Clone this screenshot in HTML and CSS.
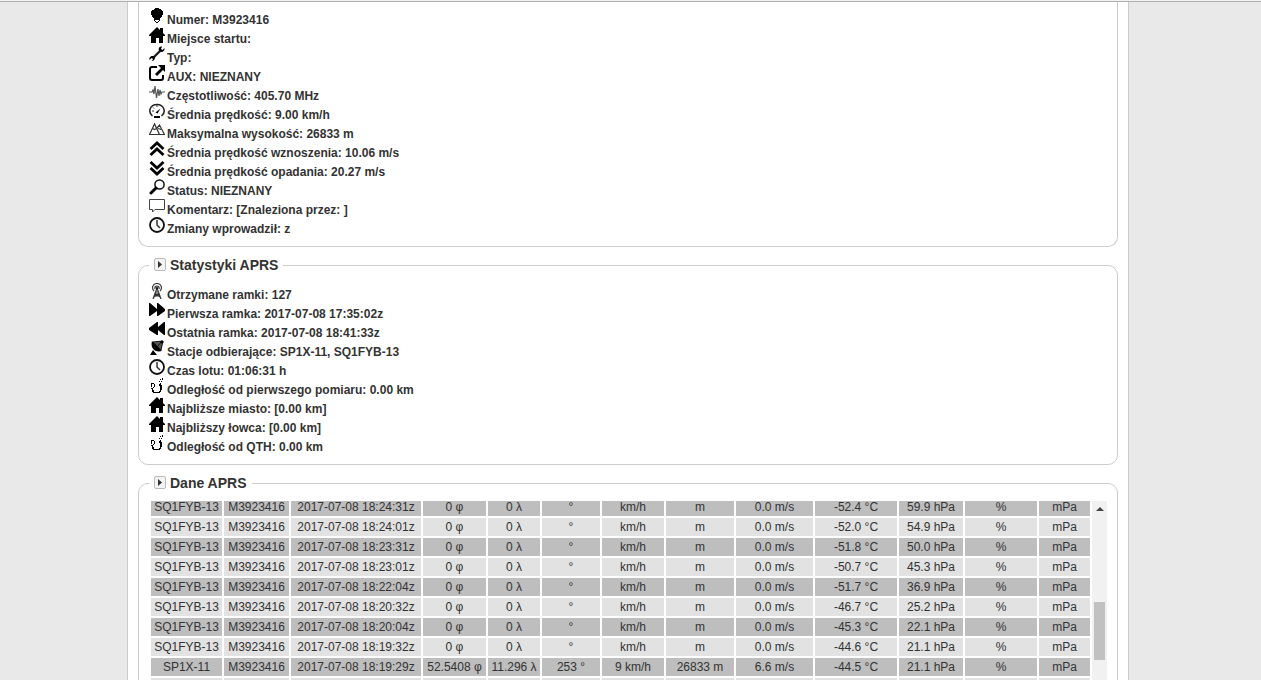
FILE: index.html
```html
<!DOCTYPE html>
<html lang="pl">
<head>
    <meta charset="UTF-8">
    <meta name="viewport" content="width=device-width, initial-scale=1.0">
    <title>Radiosonda M3923416</title>
    <link rel="stylesheet" href="styles.css">
</head>
<body>
    <svg class="sprite" viewBox="0 0 16 16">
        <symbol id="balloon" viewBox="0 0 16 16"><path d="M5 1h1V0h4v1h2v1h1v1h1v4h-1v2h-1v1h-1v1h-1v1H6v-1H5v-1H4V9H3V7H2V3h1V2h2z"/><path d="M5 11h1v1h4v-1h1v2h-1v1H9v1H7v-1H6v-1H5z"/><path d="M6 12h4v1H6zM7 13h2v1H7z" fill="#fff"/></symbol>
        <symbol id="home" viewBox="0 0 16 16"><path d="M8 0l3 3V1h3v5l2 2v1h-2v7h-4v-5H7v5H2V9H0V8z"/></symbol>
        <symbol id="wrench" viewBox="0 0 16 16"><path d="M4 12l8-8" stroke="#222" stroke-width="2.400"/><path d="M15.500 2l-2 2-1.500-1 1-2.500c-2.500 0-4 1.500-3 4l2 1.500c2.500 0 4-2 3.500-4zM.5 14l2-2 1.500 1-1 2c2 0 3-2 3-4l-2-1c-3 0-4 2-3.500 4z"/></symbol>
        <symbol id="external" viewBox="0 0 16 16"><path d="M8 2H3Q1 2 1 4v9q0 2 2 2h9q2 0 2-2v-3" fill="none" stroke="#000" stroke-width="2"/><path d="M9 0h7v7l-2-2-6 6-2-2 6-6z"/></symbol>
        <symbol id="wave" viewBox="0 0 16 16"><path d="M0 8h3l1-2 1 4 1-8 1.500 12L9 5l1 7 1-6 1 4 1-2h3" fill="none" stroke="#555" stroke-width="1.200"/></symbol>
        <symbol id="gauge" viewBox="0 0 16 16"><path d="M3.500 13C-1.500 9 1 1.500 8 1.500S17.500 9 12.500 13" fill="none" stroke="#222" stroke-width="1.500"/><path d="M5 13h6v2H5zM6.500 9.500l5-4-3 5z"/><path d="M3 8h2M4 4.500l1 1M8 2v2" stroke="#333"/></symbol>
        <symbol id="mountain" viewBox="0 0 16 16"><path d="M.5 12.500L5.500 2l5 10.500zM8 6l2.500-3 5 9.500h-5M3.500 6.500l2 1 2-1M9 6.500l3 1" fill="none" stroke="#333" stroke-width="1.200"/></symbol>
        <symbol id="up" viewBox="0 0 16 16"><path d="M1.500 8L8 2l6.500 6M1.500 14L8 8l6.500 6" fill="none" stroke="#000" stroke-width="2.800"/></symbol>
        <symbol id="down" viewBox="0 0 16 16"><path d="M1.500 2L8 8l6.500-6M1.500 8L8 14l6.500-6" fill="none" stroke="#000" stroke-width="2.800"/></symbol>
        <symbol id="search" viewBox="0 0 16 16"><circle cx="10.500" cy="5.500" r="4.600" fill="none" stroke="#111" stroke-width="1.500"/><path d="M7 9l-5 5" stroke="#000" stroke-width="3" stroke-linecap="round"/></symbol>
        <symbol id="comment" viewBox="0 0 16 16"><path d="M.5 1.500h15v10H6L3.500 14v-2.500h-3z" fill="none" stroke="#444"/></symbol>
        <symbol id="clock" viewBox="0 0 16 16"><circle cx="8" cy="8" r="7" fill="none" stroke="#111" stroke-width="1.800"/><path d="M8 3v5l3 3" fill="none" stroke="#333" stroke-width="1.500"/></symbol>
        <symbol id="tower" viewBox="0 0 16 16"><path d="M5 8C2 5 4 .5 8 .5s6 4.500 3 7.500M6 6c-1-4 5-4 4 0M8 5L4 16M8 5l4 11M6 9h4M5 13h6M6 10l5 4M10 10l-5 4" fill="none" stroke="#333" stroke-width="1.200"/><circle cx="8" cy="5" r="1"/></symbol>
        <symbol id="forward" viewBox="0 0 16 16"><path d="M0 1l1 0 7 6V1h1l7 6v2l-7 5H8V9l-7 5H0z"/></symbol>
        <symbol id="rewind" viewBox="0 0 16 16"><path d="M16 1h-1L9 6V1H8L0 7v2l8 5h1V9l6 5h1z"/></symbol>
        <symbol id="dish" viewBox="0 0 16 16"><path d="M3 1c-2 7 3 12 10 10L9 7zM1 15l3-5 4 5z"/><path d="M4 2l8 8 2-9zM8 7l5-6" fill="#555" stroke="#111"/><circle cx="13" cy="2" r="1.500"/></symbol>
        <symbol id="route" viewBox="0 0 16 16"><path d="M2 5h3v1h1v3H5v1H4v2h1v2h5v-1h1V8h-1V6h2v1h1v5h-1v2h-1v1H4v-1H3v-3H2v-1h2V9h1V6H3v3H2z"/><path d="M10 3h1v1h-1zM11 5h1v1h-1zM12 3h1v1h-1zM11 1h1v1h-1zM13 0h1v2h-1z"/></symbol>
        <symbol id="arrow" viewBox="0 0 10 11"><path d="M3 2v7l4-3.500z" fill="#333"/></symbol>
    </svg>

    <div class="topline"></div>
    <div class="page">
        <fieldset class="box first">
            <ul class="info">
                <li><svg><use href="#balloon"/></svg>Numer: M3923416</li>
                <li><svg><use href="#home"/></svg>Miejsce startu:</li>
                <li><svg><use href="#wrench"/></svg>Typ:</li>
                <li><svg><use href="#external"/></svg>AUX: NIEZNANY</li>
                <li><svg><use href="#wave"/></svg>Częstotliwość: 405.70 MHz</li>
                <li><svg><use href="#gauge"/></svg>Średnia prędkość: 9.00 km/h</li>
                <li><svg><use href="#mountain"/></svg>Maksymalna wysokość: 26833 m</li>
                <li><svg><use href="#up"/></svg>Średnia prędkość wznoszenia: 10.06 m/s</li>
                <li><svg><use href="#down"/></svg>Średnia prędkość opadania: 20.27 m/s</li>
                <li><svg><use href="#search"/></svg>Status: NIEZNANY</li>
                <li><svg><use href="#comment"/></svg>Komentarz: [Znaleziona przez: ]</li>
                <li><svg><use href="#clock"/></svg>Zmiany wprowadził: z</li>
            </ul>
        </fieldset>

        <fieldset class="box">
            <legend><button type="button" class="toggle" aria-label="Statystyki APRS"><svg><use href="#arrow"/></svg></button>Statystyki APRS</legend>
            <ul class="info">
                <li><svg><use href="#tower"/></svg>Otrzymane ramki: 127</li>
                <li><svg><use href="#forward"/></svg>Pierwsza ramka: 2017-07-08 17:35:02z</li>
                <li><svg><use href="#rewind"/></svg>Ostatnia ramka: 2017-07-08 18:41:33z</li>
                <li><svg><use href="#dish"/></svg>Stacje odbierające: SP1X-11, SQ1FYB-13</li>
                <li><svg><use href="#clock"/></svg>Czas lotu: 01:06:31 h</li>
                <li><svg><use href="#route"/></svg>Odległość od pierwszego pomiaru: 0.00 km</li>
                <li><svg><use href="#home"/></svg>Najbliższe miasto: [0.00 km]</li>
                <li><svg><use href="#home"/></svg>Najbliższy łowca: [0.00 km]</li>
                <li><svg><use href="#route"/></svg>Odległość od QTH: 0.00 km</li>
            </ul>
        </fieldset>

        <fieldset class="box">
            <legend><button type="button" class="toggle" aria-label="Dane APRS"><svg><use href="#arrow"/></svg></button>Dane APRS</legend>
            <div class="scroller">
                <table class="frames">
                    <colgroup>
                        <col class="c-station"><col class="c-number"><col class="c-time"><col class="c-lat"><col class="c-lon"><col class="c-course"><col class="c-speed"><col class="c-alt"><col class="c-climb"><col class="c-temp"><col class="c-press"><col class="c-hum"><col class="c-ozone">
                    </colgroup>
                    <tbody id="frames"></tbody>
                </table>
                <div class="scrollbar">
                    <div class="scroll-up"></div>
                    <div class="thumb"></div>
                </div>
            </div>
        </fieldset>
    </div>

    <script>
        // station, time, lat, lon, course, speed, altitude, climb, temperature, pressure
        const frames = [
            ["SQ1FYB-13", "18:24:31", "0", "0", "", "", "", "0.0", "-52.4", "59.9"],
            ["SQ1FYB-13", "18:24:01", "0", "0", "", "", "", "0.0", "-52.0", "54.9"],
            ["SQ1FYB-13", "18:23:31", "0", "0", "", "", "", "0.0", "-51.8", "50.0"],
            ["SQ1FYB-13", "18:23:01", "0", "0", "", "", "", "0.0", "-50.7", "45.3"],
            ["SQ1FYB-13", "18:22:04", "0", "0", "", "", "", "0.0", "-51.7", "36.9"],
            ["SQ1FYB-13", "18:20:32", "0", "0", "", "", "", "0.0", "-46.7", "25.2"],
            ["SQ1FYB-13", "18:20:04", "0", "0", "", "", "", "0.0", "-45.3", "22.1"],
            ["SQ1FYB-13", "18:19:32", "0", "0", "", "", "", "0.0", "-44.6", "21.1"],
            ["SP1X-11", "18:19:29", "52.5408", "11.296", "253", "9", "26833", "6.6", "-44.5", "21.1"],
            ["", "", "", "", "", "", "", "", "", ""]
        ];

        const tbody = document.getElementById("frames");
        frames.forEach((f) => {
            const row = document.createElement("tr");
            const cells = f[0] === "" ? Array(13).fill("") : [
                f[0], "M3923416", `2017-07-08 ${f[1]}z`, `${f[2]} φ`, `${f[3]} λ`, `${f[4]} °`,
                `${f[5]} km/h`, `${f[6]} m`, `${f[7]} m/s`, `${f[8]} °C`, `${f[9]} hPa`, "%", "mPa"
            ];
            row.innerHTML = cells.map((c) => `<td>${c}</td>`).join("");
            tbody.appendChild(row);
        });
    </script>
</body>
</html>
```
FILE: styles.css
```css
* { box-sizing: border-box; }
body { margin: 0; padding-right: 5px; height: 100vh; overflow: hidden; display: flex; flex-direction: column; background-color: #e9e9e9; color: #333; font-family: "Liberation Sans", Arial, sans-serif; font-size: 12px; line-height: 14px; }
.sprite { display: none; }
.topline { flex: none; height: 2px; margin-right: -5px; background-color: #f2f2f2; border-bottom: 1px solid #b0b0b0; }
.page { flex: 1; min-height: 0; overflow: hidden; width: 100%; max-width: 1002px; margin: 0 auto; padding: 0 10px; border: 1px solid #ccc; border-width: 0 1px; background-color: #fff; }

.box { min-width: 0; margin: 0 0 10px; padding: 9px 10px 10px; border: 1px solid #ccc; border-radius: 10px; }
.first { padding-top: 6px; border-top: none; border-radius: 0 0 10px 10px; }
legend { display: flex; align-items: center; height: 17px; padding: 0 5px; font-size: 14px; font-weight: bold; line-height: 17px; }
.toggle { width: 12px; height: 13px; margin: 0 4px 2px 0; padding: 0; border: 1px solid #bbb; border-radius: 2px; background-color: #f4f4f4; cursor: pointer; }
.toggle svg { display: block; width: 10px; height: 11px; }

.info { list-style: none; margin: 0; padding: 0; font-weight: bold; }
.info li { height: 19px; white-space: nowrap; }
.info svg { width: 16px; height: 16px; margin-right: 2px; vertical-align: baseline; }

.scroller { display: flex; align-items: flex-start; height: 240px; overflow: hidden; }
.frames { flex: 1; margin-top: -5px; table-layout: fixed; border-collapse: separate; border-spacing: 2px; }
.frames td { height: 18px; padding: 0; text-align: center; white-space: nowrap; background-color: #e2e2e2; }
.frames tr:nth-child(odd) td { background-color: #bebebe; }
.c-station { width: 71px; }
.c-number { width: 65px; }
.c-time { width: 130px; }
.c-lat { width: 63px; }
.c-lon { width: 52px; }
.c-course { width: 58px; }
.c-speed { width: 62px; }
.c-alt { width: 68px; }
.c-climb { width: 77px; }
.c-temp { width: 82px; }
.c-press { width: 64px; }
.c-hum { width: 72px; }
.c-ozone { width: 51px; }

.scrollbar { flex: none; width: 15px; height: 100%; padding: 6px 2px; background-color: #f1f1f1; }
.scroll-up { width: 0; margin: 0 auto 91px; border: 4px solid transparent; border-top: none; border-bottom-color: #444; }
.thumb { height: 58px; background-color: #c1c1c1; }
```
